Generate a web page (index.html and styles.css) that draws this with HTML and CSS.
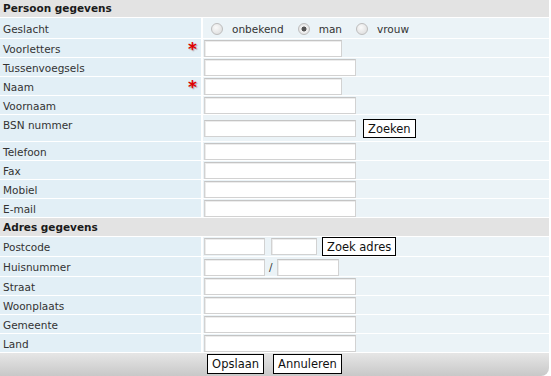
FILE: index.html
```html
<!DOCTYPE html>
<html lang="nl">
<head>
    <meta charset="UTF-8">
    <title>Persoon gegevens</title>
    <link rel="stylesheet" href="styles.css">
</head>
<body>
    <table class="form-table">
        <tr class="section section-first">
            <td colspan="2">Persoon gegevens</td>
        </tr>
        <tr class="row-radio">
            <td class="label">Geslacht</td>
            <td class="value">
                <div class="radios">
                    <label><input type="radio" name="geslacht"> onbekend</label>
                    <label><input type="radio" name="geslacht" checked> man</label>
                    <label><input type="radio" name="geslacht"> vrouw</label>
                </div>
            </td>
        </tr>
        <tr>
            <td class="label">Voorletters<span class="req">*</span></td>
            <td class="value"><input type="text" class="w-m"></td>
        </tr>
        <tr>
            <td class="label">Tussenvoegsels</td>
            <td class="value"><input type="text" class="w-l"></td>
        </tr>
        <tr>
            <td class="label">Naam<span class="req">*</span></td>
            <td class="value"><input type="text" class="w-m"></td>
        </tr>
        <tr>
            <td class="label">Voornaam</td>
            <td class="value"><input type="text" class="w-l"></td>
        </tr>
        <tr class="row-bsn">
            <td class="label">BSN nummer</td>
            <td class="value">
                <div class="group">
                    <input type="text" class="w-l">
                    <button type="button" class="btn btn-bsn">Zoeken</button>
                </div>
            </td>
        </tr>
        <tr>
            <td class="label">Telefoon</td>
            <td class="value"><input type="text" class="w-l"></td>
        </tr>
        <tr>
            <td class="label">Fax</td>
            <td class="value"><input type="text" class="w-l"></td>
        </tr>
        <tr>
            <td class="label">Mobiel</td>
            <td class="value"><input type="text" class="w-l"></td>
        </tr>
        <tr>
            <td class="label">E-mail</td>
            <td class="value"><input type="text" class="w-l"></td>
        </tr>
        <tr class="section">
            <td colspan="2">Adres gegevens</td>
        </tr>
        <tr class="row-postcode">
            <td class="label">Postcode</td>
            <td class="value">
                <div class="group">
                    <input type="text" class="w-s">
                    <input type="text" class="w-xs">
                    <button type="button" class="btn">Zoek adres</button>
                </div>
            </td>
        </tr>
        <tr class="row-nr">
            <td class="label">Huisnummer</td>
            <td class="value">
                <div class="group">
                    <input type="text" class="w-s">
                    <span class="slash">/</span>
                    <input type="text" class="w-s2">
                </div>
            </td>
        </tr>
        <tr>
            <td class="label">Straat</td>
            <td class="value"><input type="text" class="w-l"></td>
        </tr>
        <tr>
            <td class="label">Woonplaats</td>
            <td class="value"><input type="text" class="w-l"></td>
        </tr>
        <tr>
            <td class="label">Gemeente</td>
            <td class="value"><input type="text" class="w-l"></td>
        </tr>
        <tr>
            <td class="label">Land</td>
            <td class="value"><input type="text" class="w-l"></td>
        </tr>
        <tr class="footer">
            <td colspan="2">
                <div class="actions">
                    <button type="button" class="btn btn-foot">Opslaan</button>
                    <button type="button" class="btn btn-foot">Annuleren</button>
                </div>
            </td>
        </tr>
    </table>
</body>
</html>
```

FILE: styles.css
```css
body {
    margin: 0;
    font-family: "DejaVu Sans", Verdana, sans-serif;
    font-size: 10.5px;
    color: #333;
    background: #fff;
}
.form-table {
    width: 549px;
    border-collapse: separate;
    border-spacing: 0;
}
.form-table td {
    padding: 0;
    border-bottom: 1px solid #fff;
}
.section td {
    background: #e3e3e3;
    font-weight: bold;
    color: #1a1a1a;
    line-height: 18px;
    height: 18px;
    padding-left: 3px;
    vertical-align: top;
}
.section-first td {
    height: 17px;
    line-height: 16px;
}
.label {
    width: 198px;
    background: #e2eff6;
    border-right: 2px solid #fff;
    padding: 3px 0 0 3px !important;
    line-height: 15px;
    vertical-align: top;
}
.value {
    background: #ebf3f7;
    padding: 1px 0 0 1px !important;
    vertical-align: top;
}
.req {
    float: right;
    margin: 0 4px 0 0;
    color: #e00000;
    font-weight: bold;
    font-size: 17px;
    line-height: 14px;
    text-shadow: 1px 1px 1px #aaa;
}
input[type="text"] {
    box-sizing: border-box;
    height: 17px;
    margin: 0;
    padding: 0 2px;
    border: 1px solid #d2d2d2;
    border-top-color: #c4c4c4;
    box-shadow: inset 1px 1px 0 #ececec;
    background: #fff;
    display: block;
    font: inherit;
}
.w-l { width: 152px; }
.w-m { width: 138px; }
.w-s { width: 61px; }
.w-xs { width: 46px; }
.w-s2 { width: 62px; }
.row-radio .label {
    padding-top: 4px !important;
}
.radios {
    display: flex;
    align-items: center;
    height: 19px;
    padding-left: 7px;
}
.radios label {
    display: flex;
    align-items: center;
    margin-right: 14px;
}
input[type="radio"] {
    appearance: none;
    width: 12px;
    height: 12px;
    margin: 0 9px 0 0;
    border-radius: 50%;
    border: 1px solid #bdbdbd;
    background: radial-gradient(circle at 40% 35%, #fafafa, #d9d9d9);
    box-sizing: border-box;
}
input[type="radio"]:checked {
    background: radial-gradient(circle, #555 0 2.2px, #f2f2f2 2.8px, #d9d9d9);
}
.group {
    display: flex;
    align-items: center;
}
.row-bsn .value {
    padding-top: 1px !important;
}
.row-bsn .group {
    height: 25px;
}
.row-postcode .value {
    padding-top: 0 !important;
}
.row-postcode .group {
    height: 19px;
}
.row-nr .group {
    height: 18px;
}
.group input + input {
    margin-left: 6px;
}
.btn {
    font: inherit;
    font-size: 11.5px;
    color: #111;
    background: #fff;
    border: 1px solid #000;
    padding: 0 4px;
    height: 19px;
    line-height: 16px;
    margin: 0;
    cursor: pointer;
}
.btn-bsn {
    margin-left: 7px;
}
.row-postcode .btn {
    margin-left: 5px;
}
.slash {
    margin: 0 4px;
    color: #333;
}
.footer td {
    border-bottom: none;
    background: linear-gradient(#e6e6e6, #c8c8c8);
    border-bottom-right-radius: 8px;
}
.actions {
    display: flex;
    justify-content: center;
    gap: 9px;
    height: 23px;
    padding-top: 1px;
    box-sizing: border-box;
}
.btn-foot {
    height: 20px;
    padding: 0 4px;
}
```
